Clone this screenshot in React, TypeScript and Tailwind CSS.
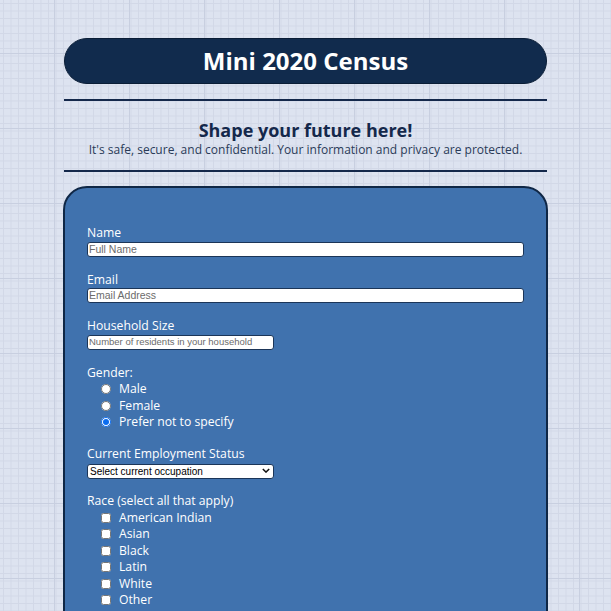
import React from "react";

const races = ["American Indian", "Asian", "Black", "Latin", "White", "Other", "Prefer not to specify"];

export default function App() {
    return (
        <div className="min-h-screen bg-[#dde3f0] bg-[image:linear-gradient(to_right,#c8cfe0_1px,transparent_1px),linear-gradient(to_bottom,#c8cfe0_1px,transparent_1px),linear-gradient(to_right,#d2d8e7_1px,transparent_1px),linear-gradient(to_bottom,#d2d8e7_1px,transparent_1px)] bg-[size:75px_75px,75px_75px,7.5px_7.5px,7.5px_7.5px] bg-[position:-21px_0,0_-22px,3px_3px,3px_3px] font-['Open_Sans',sans-serif] text-[#14284b] pt-[38px] pb-10">
            <div className="mx-auto w-[485px]">
                <header className="mx-[1px] h-[46px] rounded-full bg-[#112b4d] border border-[#0a1d36] flex items-center justify-center">
                    <h1 className="text-[24px] font-bold text-white leading-none">Mini 2020 Census</h1>
                </header>

                <hr className="mt-[15px] mx-[1px] border-0 border-t-2 border-[#14284b]" />

                <div className="text-center pt-[18px] pb-[13px]">
                    <h2 className="text-[18px] font-bold leading-[23px]">Shape your future here!</h2>
                    <p className="text-[12px] leading-[15px] text-[#2a3b58]">
                        It's safe, secure, and confidential. Your information and privacy are protected.
                    </p>
                </div>

                <hr className="mx-[1px] border-0 border-t-2 border-[#14284b]" />

                <form className="mt-[14px] rounded-[24px] bg-[#4072ae] border-2 border-[#0f2746] px-[22px] pt-[37px] pb-10 text-white text-[12.2px] leading-[16.5px]">
                    <div className="flex flex-col">
                        <label>Name</label>
                        <input
                            placeholder="Full Name"
                            className="h-[15px] w-full bg-white rounded-[3px] border border-[#1b3558] px-[1px] font-['Liberation_Sans',sans-serif] text-[10.5px] text-black placeholder:text-[#6b6b6b]"
                        />
                    </div>

                    <div className="flex flex-col mt-[15px]">
                        <label>Email</label>
                        <input
                            placeholder="Email Address"
                            className="h-[15px] w-full bg-white rounded-[3px] border border-[#1b3558] px-[1px] font-['Liberation_Sans',sans-serif] text-[10.5px] text-black placeholder:text-[#6b6b6b]"
                        />
                    </div>

                    <div className="flex flex-col mt-[15px]">
                        <label>Household Size</label>
                        <input
                            placeholder="Number of residents in your household"
                            className="h-[15px] w-[187px] bg-white rounded-[3px] border border-[#1b3558] px-[1px] font-['Liberation_Sans',sans-serif] text-[9.5px] text-black placeholder:text-[#6b6b6b]"
                        />
                    </div>

                    <div className="mt-[15px]">
                        <p>Gender:</p>
                        {["Male", "Female", "Prefer not to specify"].map((g, i) => (
                            <label key={g} className="flex items-center h-[16.5px] pl-[14px]">
                                <input
                                    type="radio"
                                    name="gender"
                                    defaultChecked={i === 2}
                                    className="m-0 w-[10px] h-[10px] accent-[#0a6cf0]"
                                />
                                <span className="ml-[8px]">{g}</span>
                            </label>
                        ))}
                    </div>

                    <div className="flex flex-col mt-[15px]">
                        <label>Current Employment Status</label>
                        <div className="relative w-[187px] h-[15px] mt-[1px]">
                            <select className="appearance-none w-full h-full bg-white rounded-[3px] border border-[#1b3558] pl-[2px] font-['Liberation_Sans',sans-serif] text-[10px] leading-[13px] text-black">
                                <option>Select current occupation</option>
                                <option>Employed</option>
                                <option>Unemployed</option>
                                <option>Student</option>
                                <option>Retired</option>
                            </select>
                            <svg
                                viewBox="0 0 10 6"
                                className="absolute right-[4px] top-[5px] w-[8px] h-[5px] pointer-events-none"
                            >
                                <path d="M1 1 L5 5 L9 1" fill="none" stroke="#111" strokeWidth="1.8" />
                            </svg>
                        </div>
                    </div>

                    <div className="mt-[15px]">
                        <p>Race (select all that apply)</p>
                        {races.map((r) => (
                            <label key={r} className="flex items-center h-[16.5px] pl-[14px]">
                                <input type="checkbox" className="m-0 w-[10px] h-[10px]" />
                                <span className="ml-[8px]">{r}</span>
                            </label>
                        ))}
                    </div>
                </form>
            </div>
        </div>
    );
}
